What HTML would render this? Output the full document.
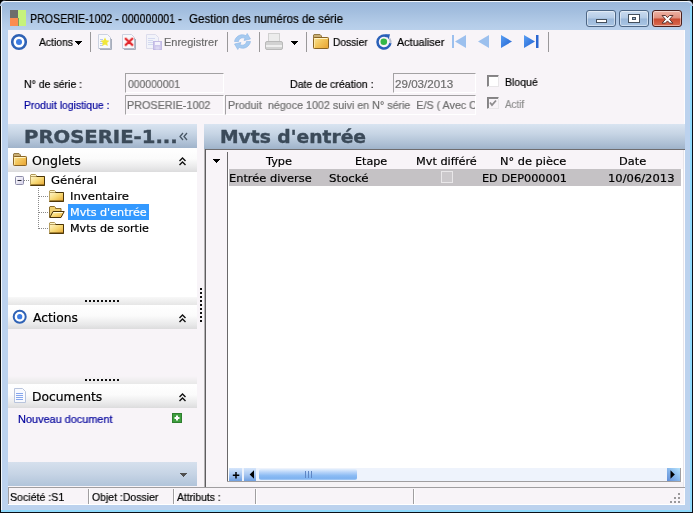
<!DOCTYPE html>
<html><head><meta charset="utf-8">
<style>
*{box-sizing:border-box;margin:0;padding:0}
html,body{width:693px;height:513px;overflow:hidden;background:#000}
body{position:relative;font-family:"Liberation Sans",sans-serif;font-size:11px;color:#000}
.a{position:absolute}
#frame{position:absolute;left:0;top:0;width:693px;height:513px;border-radius:6px 6px 0 0;overflow:hidden;background:#bcd2ee}
#cap{position:absolute;left:1px;top:1px;width:691px;height:29px;border-radius:5px 5px 0 0;background:linear-gradient(#9ab7da 0,#a4bfdf 10px,#b4cce8 22px,#bad1ec 29px);border-top:1px solid #f2f6fb}
#client{position:absolute;left:8px;top:30px;width:677px;height:475px;background:#f8f4f8}
.t{position:absolute;white-space:nowrap;line-height:14px;font-size:11px;transform-origin:0 0;will-change:transform;-webkit-text-stroke:.2px}
.sep{position:absolute;width:1px;background:#9a989a;top:32px;height:20px}
.inp{position:absolute;border:1px solid #a3a1a3;border-right-color:#fff;border-bottom-color:#fff}
.hdr{position:absolute;top:124px;height:24px;background:linear-gradient(#d9e4f1 0,#c6d4e4 40%,#adbfd4 80%,#9fb3ca 100%)}
.sec{position:absolute;left:8px;width:189px;height:24px;background:linear-gradient(#ffffff 0,#fbfbfb 45%,#e9e9ea 80%,#dcdcdd 100%)}
.cbtn{position:absolute;top:10px;height:17px;width:30px;border:1px solid #4d6685;border-radius:3px;box-shadow:inset 0 0 0 1px rgba(255,255,255,.45)}
.dot{position:absolute;width:2px;height:2px;background:#111}
</style></head><body>
<div id="frame">
 <div class="a" style="left:0;top:0;width:693px;height:1px;background:#0c0c0c"></div>
 <div id="cap"></div>
 <div class="a" style="left:1px;top:6px;width:1px;height:506px;background:#f4f8fc"></div>
 <div class="a" style="left:0;top:6px;width:1px;height:507px;background:#0c0c0c"></div>
 <div class="a" style="left:690px;top:6px;width:2px;height:506px;background:#8fdafc"></div>
 <div class="a" style="left:692px;top:6px;width:1px;height:507px;background:#0a1018"></div>
 <div class="a" style="left:1px;top:510px;width:691px;height:2px;background:#8fdafc"></div>
 <div class="a" style="left:0;top:512px;width:693px;height:1px;background:#0a1018"></div>
 <div id="client"></div>
 <div class="a" style="left:684px;top:30px;width:1px;height:475px;background:#fdfcfe"></div>

 <!-- app icon -->
 <svg class="a" style="left:10px;top:10px" width="16" height="16"><rect x="0" y="0" width="8" height="8" fill="#6d6e6b"/><rect x="0" y="8" width="8" height="8" fill="#fb8c4e"/><rect x="8" y="0" width="8" height="16" fill="#c6f27c"/><rect x="8" y="8" width="1" height="8" fill="#7f9a5c"/></svg>

 <!-- caption buttons -->
 <div class="cbtn" style="left:586px;background:linear-gradient(#cbdcf0 0,#b4cbe6 48%,#9ab7d9 52%,#a9c5e4 100%)"></div>
 <div class="cbtn" style="left:619px;background:linear-gradient(#cbdcf0 0,#b4cbe6 48%,#9ab7d9 52%,#a9c5e4 100%)"></div>
 <div class="cbtn" style="left:652px;border-color:#4a1f1c;background:linear-gradient(#eeb3a5 0,#e08f7d 48%,#c94a30 52%,#d96a50 100%)"></div>
 <svg class="a" style="left:586px;top:10px" width="97" height="17">
  <rect x="10.5" y="9.5" width="10" height="3" fill="#fff" stroke="#444f5c"/>
  <rect x="42.500" y="4.500" width="11" height="8" fill="#fff" stroke="#444f5c"/><rect x="46.500" y="7.500" width="3" height="2" fill="#9fb6d2" stroke="#444f5c"/>
  <path d="M76 5.500 h3.500 l2 2.200 l2 -2.200 h3.500 l-3.500 3.800 l3.500 3.800 h-3.500 l-2 -2.200 l-2 2.200 h-3.500 l3.500 -3.800 z" fill="#fff" stroke="#5a3430" stroke-width="1"/>
 </svg>

 <!-- toolbar icons -->
 <svg class="a" style="left:8px;top:30px" width="560" height="26">
  <defs>
   <linearGradient id="fo" x1="0" y1="0" x2="1" y2=".8"><stop offset="0" stop-color="#fbe59a"/><stop offset=".5" stop-color="#f3c65c"/><stop offset="1" stop-color="#eaa838"/></linearGradient>
   <linearGradient id="nav" x1="0" y1="0" x2="1" y2="1"><stop offset="0" stop-color="#5aa0f4"/><stop offset="1" stop-color="#1f5fd0"/></linearGradient>
  </defs>
  <!-- actions circle -->
  <circle cx="11" cy="12" r="6.800" fill="#fff" stroke="#2f62b5" stroke-width="2.600"/><circle cx="11" cy="12" r="3" fill="#3c7ce2"/>
  <path d="M67 11 h7 v1 h-1 v1 h-1 v1 h-1 v1 h-1 v-1 h-1 v-1 h-1 v-1 h-1 z" shape-rendering="crispEdges" fill="#000"/>
  <!-- new doc -->
  <path d="M90.500 4.500 h9 l3 3 v11 h-12 z" fill="#f8f9fc" stroke="#ccd2e0"/><path d="M91 18.500 h11.500 v-10.500" fill="none" stroke="#b4bac8"/><path d="M92 19.500 h11.500 v-10.500" fill="none" stroke="#a8aebc"/><path d="M92 9.500 h3 M92 11.500 h3 M92 13.500 h3 M92 15.500 h3" stroke="#b8c8ec"/>
  <path d="M97 7.500 l1.400 2.800 l3 .4 l-2.200 2.100 l.6 3.100 l-2.800 -1.500 l-2.800 1.500 l.6 -3.100 l-2.200 -2.100 l3 -.4 z" fill="#f0e73a"/>
  <!-- delete -->
  <path d="M114.500 4.500 h9 l3 3 v11 h-12 z" fill="#f8f9fc" stroke="#ccd2e0"/><path d="M115 18.500 h11.500 v-10.500" fill="none" stroke="#b4bac8"/><path d="M116 19.500 h11.500 v-10.500" fill="none" stroke="#a8aebc"/>
  <path d="M117.800 8.800 l6.400 6 M124.200 8.800 l-6.400 6" stroke="#f8b4b4" stroke-width="3.600" stroke-linecap="round"/><path d="M117.800 8.800 l6.400 6 M124.200 8.800 l-6.400 6" stroke="#e0262c" stroke-width="1.700" stroke-linecap="round"/>
  <!-- save disabled -->
  <path d="M138.500 4.500 h9 l3 3 v11 h-12 z" fill="#f2f3fa" stroke="#dcdcec"/><path d="M140 8.500 h7 M140 10.500 h5 M140 12.500 h5 M140 14.500 h5" stroke="#d4daf0"/><rect x="145.500" y="11.500" width="8" height="8" fill="#cfc8ec" stroke="#c2bae4"/><rect x="147" y="12" width="5" height="3" fill="#f4f2fc"/><rect x="147.500" y="16.500" width="4" height="3" fill="#dcd8f2"/>
  <!-- refresh faded -->
  <path d="M226.500 11.500 C227.500 6 233.500 3 238 5.800 L239.200 3.500 L242.500 9 L236 10.500 L237 8.300 C234 7 231 8.500 230.500 11.500 Z" fill="#a6caf0" stroke="#8cb6e6" stroke-width=".6"/>
  <path transform="rotate(180 234.500 11.500)" d="M226.500 11.500 C227.500 6 233.500 3 238 5.800 L239.200 3.500 L242.500 9 L236 10.500 L237 8.300 C234 7 231 8.500 230.500 11.500 Z" fill="#a6caf0" stroke="#8cb6e6" stroke-width=".6"/>
  <!-- printer -->
  <rect x="260.500" y="3.500" width="11" height="8" fill="#ececec" stroke="#d0d0d0"/><rect x="257.500" y="11.500" width="17" height="8" rx="1.500" fill="#d2d2d2" stroke="#b9b9b9"/><rect x="258" y="15" width="16" height="2" fill="#efefef"/>
  <path d="M283 11 h7 v1 h-1 v1 h-1 v1 h-1 v1 h-1 v-1 h-1 v-1 h-1 v-1 h-1 z" shape-rendering="crispEdges" fill="#000"/>
  <!-- folder -->
  <g transform="translate(305,4)"><path d="M.5 4 v-3 l.5 -.5 h6 l1.500 1.500 v2 z" fill="#c9ae74" stroke="#947a44"/><rect x=".5" y="3.500" width="15" height="11" rx=".8" fill="url(#fo)" stroke="#8a6424"/><path d="M1.500 4.500 h13" stroke="#fff4c4" stroke-width="1"/><path d="M1.500 5 v8.5" stroke="#fbe8a4" stroke-width="1"/></g>
  <!-- actualiser -->
  <path d="M379.2 6.400 A6.500 6.500 0 1 0 382.400 13.100" fill="none" stroke="#2a60b8" stroke-width="2.500"/><path d="M382.400 13.100 A6.500 6.500 0 0 0 381.500 8.500" fill="none" stroke="#b4bcd0" stroke-width="2"/><path d="M377 4.200 L382 4.300 L380.800 9.200 z" fill="#2a60b8"/><circle cx="375.800" cy="11.700" r="3.300" fill="#35b846"/>
  <!-- nav -->
  <rect x="444" y="5" width="2" height="13" fill="#9cc0ee"/><path d="M458 5 v13 l-11 -6.500 z" fill="#9cc0ee"/>
  <path d="M481 5 v13 l-11 -6.500 z" fill="#9cc0ee"/>
  <path d="M493 5 v13 l11 -6.500 z" fill="url(#nav)"/>
  <path d="M516 5 v13 l11 -6.500 z" fill="url(#nav)"/><rect x="528" y="5" width="2.500" height="13" fill="#2a66d0"/>
 </svg>
 <div class="sep" style="left:90px"></div>
 <div class="sep" style="left:227px"></div>
 <div class="sep" style="left:259px"></div>
 <div class="sep" style="left:306px"></div>
 <div class="sep" style="left:548px"></div>

 <!-- form -->
 <div class="inp" style="left:125px;top:73px;width:99px;height:20px"></div>
 <div class="inp" style="left:125px;top:95px;width:99px;height:20px"></div>
 <div class="inp" style="left:225px;top:95px;width:251px;height:20px;overflow:hidden"><div class="t" id="f5" style="left:2px;top:2px;color:#6e6e6e;transform:scaleX(.974)">Produit&nbsp; négoce 1002 suivi en N° série&nbsp; E/S ( Avec Contrôle )</div></div>
 <div class="inp" style="left:393px;top:73px;width:83px;height:20px"></div>
 <div class="a" style="left:487px;top:75px;width:12px;height:12px;background:#fff;border:1px solid #848284;border-right-color:#e8e6e8;border-bottom-color:#e8e6e8;box-shadow:inset 1px 1px 0 #8a888a"></div>
 <div class="a" style="left:487px;top:97px;width:12px;height:12px;background:#f8f4f8;border:1px solid #848284;border-right-color:#e8e6e8;border-bottom-color:#e8e6e8;box-shadow:inset 1px 1px 0 #8a888a"></div>
 <svg class="a" style="left:487px;top:97px" width="12" height="12"><path d="M3 5.500 l2 2.500 l4 -4.500" fill="none" stroke="#8f8d8f" stroke-width="1.800"/></svg>

 <!-- headers -->
 <div class="hdr" style="left:8px;width:189px"></div>
 <div class="hdr" style="left:204px;width:481px;height:25px"></div>
 <svg class="a" style="left:178px;top:131px" width="12" height="12"><path d="M5 2 l-3 3.500 l3 3.500 M9 2 l-3 3.500 l3 3.500" fill="none" stroke="#4a5866" stroke-width="1.300"/></svg>

 <!-- left panel -->
 <div class="a" style="left:8px;top:149px;width:189px;height:149px;background:#fff"></div>
 <div class="sec" style="top:148px"></div>
 <div class="a" style="left:8px;top:297px;width:189px;height:8px;background:linear-gradient(#f8f8f8,#e6e6e6)"></div>
 <div class="sec" style="top:305px"></div>
 <div class="a" style="left:8px;top:376px;width:189px;height:8px;background:linear-gradient(#f8f4f8,#e8e8e8)"></div>
 <div class="sec" style="top:384px"></div>
 <div class="a" style="left:8px;top:462px;width:189px;height:24px;background:linear-gradient(#d6e0ed 0,#c6d4e5 50%,#b1c4da 100%)"></div>
 <div class="a" style="left:68px;top:204px;width:81px;height:16px;background:#3399ff"></div>
 <svg class="a" style="left:8px;top:148px" width="197" height="340">
  <defs>
   <linearGradient id="fo2" x1="0" y1="0" x2="1" y2="1"><stop offset="0" stop-color="#fff6cc"/><stop offset=".5" stop-color="#f7d874"/><stop offset="1" stop-color="#e6a430"/></linearGradient>
   <linearGradient id="bx" x1="0" y1="0" x2="1" y2="1"><stop offset="0" stop-color="#fff"/><stop offset="1" stop-color="#d4d0e8"/></linearGradient>
  </defs>
  <!-- section icons -->
  <g transform="translate(5,5)"><path d="M.5 4 v-3 l.5 -.5 h5 l1.500 1.500 v2 z" fill="#c9ae74" stroke="#947a44"/><rect x=".5" y="3.500" width="13" height="9" rx=".8" fill="url(#fo)" stroke="#8a6424"/><path d="M1.500 4.500 h11" stroke="#fff4c4" stroke-width="1"/><path d="M1.500 5 v6.5" stroke="#fbe8a4" stroke-width="1"/></g>
  <circle cx="11.700" cy="168.700" r="6" fill="#fff" stroke="#2f62b5" stroke-width="2"/><circle cx="11.700" cy="168.700" r="2.600" fill="#3c7ce2"/>
  <path d="M6.500 240.500 h8 l3 3 v11 h-11 z" fill="#f8faff" stroke="#b8c4dc"/><path d="M8 245.500 h7 M8 247.500 h7 M8 249.500 h7 M8 251.500 h7" stroke="#86a6ec" stroke-width="1"/>
  <!-- chevrons -->
  <g fill="none" stroke="#111" stroke-width="1.400">
   <path d="M171.500 13 l3 -3 l3 3 M171.500 17 l3 -3 l3 3"/>
   <path d="M171.500 170 l3 -3 l3 3 M171.500 174 l3 -3 l3 3"/>
   <path d="M171.500 249 l3 -3 l3 3 M171.500 253 l3 -3 l3 3"/>
  </g>
  <!-- tree lines -->
  <g stroke="#8a8a8a" stroke-width="1" stroke-dasharray="1 1">
   <path d="M16 32.500 h6"/><path d="M30.500 40 v41"/><path d="M31 48.500 h10"/><path d="M31 64.500 h10"/><path d="M31 80.500 h10"/>
  </g>
  <rect x="7.500" y="28.500" width="8" height="8" rx="1" fill="url(#bx)" stroke="#8c8ca8"/><path d="M9.500 32.500 h4" stroke="#223" stroke-width="1"/>
  <g transform="translate(22,26)"><path d="M.5 3 v-2 l.5 -.5 h4.500 l1 1 v1.500 z" fill="#fff6c8" stroke="#b09858"/><rect x=".5" y="2.500" width="14" height="9" fill="url(#fo2)" stroke="#b8a060"/><path d="M6.500 2.500 h8 v9 h-14" fill="none" stroke="#4a3408"/><path d="M1 10.8 h13.5" stroke="#6a4c10" stroke-width=".8"/></g>
  <g transform="translate(41,42)"><path d="M.5 3 v-2 l.5 -.5 h4.500 l1 1 v1.500 z" fill="#fff6c8" stroke="#b09858"/><rect x=".5" y="2.500" width="14" height="9" fill="url(#fo2)" stroke="#b8a060"/><path d="M6.500 2.500 h8 v9 h-14" fill="none" stroke="#4a3408"/><path d="M1 10.8 h13.5" stroke="#6a4c10" stroke-width=".8"/></g>
  <g transform="translate(41,58)"><path d="M.5 11.500 v-10.500 l.5 -.5 h4.500 l1 1 v1 h5.500 v3" fill="#f0d070" stroke="#8a6c2c"/><path d="M.8 11.500 l3.200 -6 h11.200 l-3.200 6 z" fill="url(#fo2)" stroke="#4a3408"/><path d="M4.800 6.500 h9" stroke="#fffbe0"/></g>
  <g transform="translate(41,74)"><path d="M.5 3 v-2 l.5 -.5 h4.500 l1 1 v1.500 z" fill="#fff6c8" stroke="#b09858"/><rect x=".5" y="2.500" width="14" height="9" fill="url(#fo2)" stroke="#b8a060"/><path d="M6.500 2.500 h8 v9 h-14" fill="none" stroke="#4a3408"/><path d="M1 10.8 h13.5" stroke="#6a4c10" stroke-width=".8"/></g>
  <!-- green plus -->
  <rect x="164.500" y="265.500" width="9" height="9" fill="#3f9e3f" stroke="#2f7f2f"/><path d="M169 267.500 v5 M166.500 270 h5" stroke="#fff" stroke-width="2"/>
  <!-- bottom arrow -->
  <path d="M172 325 h7 v1 h-1 v1 h-1 v1 h-1 v1 h-1 v-1 h-1 v-1 h-1 v-1 h-1 z" shape-rendering="crispEdges" fill="#505050"/>
 </svg>
 <!-- splitter dots -->
 <svg class="a" style="left:84px;top:296px" width="130" height="90"><g fill="#111">
  <path d="M1 4h2v2h-2z M5 4h2v2h-2z M9 4h2v2h-2z M13 4h2v2h-2z M17 4h2v2h-2z M21 4h2v2h-2z M25 4h2v2h-2z M29 4h2v2h-2z M33 4h2v2h-2z"/>
  <path d="M1 83h2v2h-2z M5 83h2v2h-2z M9 83h2v2h-2z M13 83h2v2h-2z M17 83h2v2h-2z M21 83h2v2h-2z M25 83h2v2h-2z M29 83h2v2h-2z M33 83h2v2h-2z"/>
 </g></svg>
 <svg class="a" style="left:199px;top:286px" width="4" height="40"><path d="M1 2h2v2h-2z M1 6h2v2h-2z M1 10h2v2h-2z M1 14h2v2h-2z M1 18h2v2h-2z M1 22h2v2h-2z M1 26h2v2h-2z M1 30h2v2h-2z M1 34h2v2h-2z" fill="#111"/></svg>

 <!-- right panel / grid -->
 <div class="a" style="left:204px;top:149px;width:1px;height:338px;background:#b4b2b4"></div><div class="a" style="left:205px;top:149px;width:1px;height:338px;background:#5f5d5f"></div>
 <div class="a" style="left:206px;top:149px;width:479px;height:1px;background:#6f6d6f"></div>
 <div class="a" style="left:228px;top:150px;width:455px;height:332px;background:#fff"></div><div class="a" style="left:206px;top:482px;width:478px;height:5px;background:#f6f3f6"></div>
 <div class="a" style="left:206px;top:150px;width:477px;height:19px;background:#f8f4f8"></div>
 <div class="a" style="left:227px;top:152px;width:1px;height:330px;background:#6a686a"></div>
 <div class="a" style="left:229px;top:169px;width:452px;height:17px;background:#c5c2c5"></div>
 <div class="a" style="left:441px;top:171px;width:12px;height:12px;background:#cbc8cb;border:1px solid #e9e7e9"></div>
 <svg class="a" style="left:212px;top:158px" width="9" height="6"><path d="M1 1 h7 v1 h-1 v1 h-1 v1 h-1 v1 h-1 v-1 h-1 v-1 h-1 v-1 h-1 z" shape-rendering="crispEdges" fill="#000"/></svg>
 <div class="a" style="left:683px;top:150px;width:1px;height:337px;background:#e6e4ea"></div>
 <!-- scrollbar -->
 <div class="a" style="left:229px;top:468px;width:451px;height:13px;background:#eef3fc"></div>
 <div class="a" style="left:227px;top:481px;width:454px;height:1px;background:#a09ea0"></div><div class="a" style="left:680px;top:468px;width:1px;height:13px;background:#a09ea0"></div>
 <div class="a" style="left:229px;top:468px;width:13px;height:13px;background:linear-gradient(#d6e6fb 0,#a9c8f2 50%,#6f9fe0 100%)"></div>
 <div class="a" style="left:244px;top:468px;width:12px;height:13px;background:linear-gradient(#d6e6fb 0,#a9c8f2 50%,#6f9fe0 100%)"></div>
 <div class="a" style="left:667px;top:468px;width:13px;height:13px;background:linear-gradient(225deg,#b8e4fc 0,#8cbcee 45%,#5f8cd6 100%)"></div>
 <div class="a" style="left:259px;top:469px;width:98px;height:11px;border-radius:2px;background:linear-gradient(#e4effd 0,#b6d3f9 30%,#8cbcf4 60%,#7eb2f0 85%,#a8ccf6 100%)"></div>
 <svg class="a" style="left:229px;top:468px" width="452" height="14">
  <path d="M7 4 v6.500 M3.800 7.200 h6.500" stroke="#000" stroke-width="1.500"/>
  <path d="M25 2.300 v8.400 l-4.300 -4.200 z" fill="#000"/>
  <path d="M441.500 2.300 v8.400 l4.300 -4.200 z" fill="#000"/>
  <path d="M76.500 3 v7 M79.500 3 v7 M82.500 3 v7" stroke="#5f86c4" stroke-width="1"/>
 </svg>

 <!-- status bar -->
 <div class="a" style="left:8px;top:487px;width:677px;height:1px;background:#a09ea0"></div>
 <div class="a" style="left:8px;top:488px;width:1px;height:16px;background:#a09ea0"></div>
 <div class="a" style="left:8px;top:504px;width:677px;height:1px;background:#fff"></div>
 <div class="a" style="left:88px;top:489px;width:1px;height:15px;background:#a09ea0"></div><div class="a" style="left:89px;top:489px;width:1px;height:15px;background:#fff"></div>
 <div class="a" style="left:173px;top:489px;width:1px;height:15px;background:#a09ea0"></div><div class="a" style="left:174px;top:489px;width:1px;height:15px;background:#fff"></div>
 <div class="a" style="left:255px;top:489px;width:1px;height:15px;background:#a09ea0"></div><div class="a" style="left:256px;top:489px;width:1px;height:15px;background:#fff"></div>
 <div class="a" style="left:413px;top:489px;width:1px;height:15px;background:#a09ea0"></div><div class="a" style="left:414px;top:489px;width:1px;height:15px;background:#fff"></div>
 <svg class="a" style="left:668px;top:491px" width="14" height="14"><path d="M10 2h2v2h-2z M6 6h2v2h-2z M10 6h2v2h-2z M2 10h2v2h-2z M6 10h2v2h-2z M10 10h2v2h-2z" fill="#9a989a"/></svg>

<div class="t" id="title" style="left:30.15px;top:11px;font-family:'Liberation Sans',sans-serif;font-size:12.5px;line-height:16px;transform:scaleX(0.8523)">PROSERIE-1002 - 000000001 -</div>
<div class="t" id="title2" style="left:188.58px;top:11px;font-family:'Liberation Sans',sans-serif;font-size:12.5px;line-height:16px;transform:scaleX(0.9242)">Gestion des numéros de série</div>
<div class="t" id="tb1" style="left:39.00px;top:35px;font-family:'Liberation Sans',sans-serif;;transform:scaleX(0.9444)">Actions</div>
<div class="t" id="tb2" style="left:164.00px;top:35px;font-family:'Liberation Sans',sans-serif;color:#6d6d6d;transform:scaleX(1.0000)">Enregistrer</div>
<div class="t" id="tb3" style="left:333.07px;top:35px;font-family:'Liberation Sans',sans-serif;;transform:scaleX(0.9306)">Dossier</div>
<div class="t" id="tb4" style="left:396.50px;top:35px;font-family:'Liberation Sans',sans-serif;;transform:scaleX(0.9792)">Actualiser</div>
<div class="t" id="f1" style="left:24.04px;top:77px;font-family:'Liberation Sans',sans-serif;;transform:scaleX(0.9576)">N° de série :</div>
<div class="t" id="f2" style="left:24.06px;top:98px;font-family:'Liberation Sans',sans-serif;color:#00009c;transform:scaleX(0.9438)">Produit logistique :</div>
<div class="t" id="f3" style="left:127.50px;top:77px;font-family:'Liberation Sans',sans-serif;color:#6e6e6e;transform:scaleX(0.9455)">000000001</div>
<div class="t" id="f4" style="left:126.52px;top:98px;font-family:'Liberation Sans',sans-serif;color:#6e6e6e;transform:scaleX(0.9819)">PROSERIE-1002</div>
<div class="t" id="f6" style="left:290.34px;top:77px;font-family:'Liberation Sans',sans-serif;;transform:scaleX(0.9635)">Date de création :</div>
<div class="t" id="f7" style="left:395.44px;top:77px;font-family:'Liberation Sans',sans-serif;color:#6e6e6e;transform:scaleX(1.0556)">29/03/2013</div>
<div class="t" id="f8" style="left:504.55px;top:75px;font-family:'Liberation Sans',sans-serif;;transform:scaleX(0.9545)">Bloqué</div>
<div class="t" id="f9" style="left:504.70px;top:97px;font-family:'Liberation Sans',sans-serif;color:#8e8e8e;transform:scaleX(0.8952)">Actif</div>
<div class="t" id="h1" style="left:23.91px;top:124.5px;font-family:'DejaVu Sans','Liberation Sans',sans-serif;font-weight:bold;color:#3b4a59;font-size:18px;line-height:24px;-webkit-text-stroke:.4px #3b4a59;transform:scaleX(1.0906)">PROSERIE-1...</div>
<div class="t" id="h2" style="left:219.76px;top:124.5px;font-family:'DejaVu Sans','Liberation Sans',sans-serif;font-weight:bold;color:#3b4a59;font-size:18px;line-height:24px;-webkit-text-stroke:.4px #3b4a59;transform:scaleX(1.0388)">Mvts d'entrée</div>
<div class="t" id="s1" style="left:32.15px;top:153px;font-family:'DejaVu Sans','Liberation Sans',sans-serif;font-size:12px;line-height:16px;transform:scaleX(1.0511)">Onglets</div>
<div class="t" id="s2" style="left:32.70px;top:310px;font-family:'DejaVu Sans','Liberation Sans',sans-serif;font-size:12px;line-height:16px;transform:scaleX(1.0256)">Actions</div>
<div class="t" id="s3" style="left:31.97px;top:389px;font-family:'DejaVu Sans','Liberation Sans',sans-serif;font-size:12px;line-height:16px;transform:scaleX(1.0269)">Documents</div>
<div class="t" id="t1" style="left:50.94px;top:174px;font-family:'DejaVu Sans','Liberation Sans',sans-serif;;transform:scaleX(1.0610)">Général</div>
<div class="t" id="t2" style="left:69.94px;top:190px;font-family:'DejaVu Sans','Liberation Sans',sans-serif;;transform:scaleX(1.0611)">Inventaire</div>
<div class="t" id="t3" style="left:69.98px;top:206px;font-family:'DejaVu Sans','Liberation Sans',sans-serif;color:#fff;transform:scaleX(1.0162)">Mvts d'entrée</div>
<div class="t" id="t4" style="left:69.99px;top:222px;font-family:'DejaVu Sans','Liberation Sans',sans-serif;;transform:scaleX(1.0130)">Mvts de sortie</div>
<div class="t" id="nd" style="left:18.01px;top:412px;font-family:'Liberation Sans',sans-serif;color:#00009c;transform:scaleX(0.9915)">Nouveau document</div>
<div class="t" id="g1" style="left:266.30px;top:155px;font-family:'DejaVu Sans','Liberation Sans',sans-serif;;transform:scaleX(1.0280)">Type</div>
<div class="t" id="g2" style="left:354.69px;top:155px;font-family:'DejaVu Sans','Liberation Sans',sans-serif;;transform:scaleX(1.0133)">Etape</div>
<div class="t" id="g3" style="left:416.47px;top:155px;font-family:'DejaVu Sans','Liberation Sans',sans-serif;;transform:scaleX(1.0259)">Mvt différé</div>
<div class="t" id="g4" style="left:499.57px;top:155px;font-family:'DejaVu Sans','Liberation Sans',sans-serif;;transform:scaleX(1.0317)">N° de pièce</div>
<div class="t" id="g5" style="left:618.57px;top:155px;font-family:'DejaVu Sans','Liberation Sans',sans-serif;;transform:scaleX(1.0320)">Date</div>
<div class="t" id="r1" style="left:228.77px;top:172px;font-family:'DejaVu Sans','Liberation Sans',sans-serif;;transform:scaleX(1.0346)">Entrée diverse</div>
<div class="t" id="r2" style="left:328.53px;top:172px;font-family:'DejaVu Sans','Liberation Sans',sans-serif;;transform:scaleX(1.0743)">Stocké</div>
<div class="t" id="r3" style="left:482.48px;top:172px;font-family:'DejaVu Sans','Liberation Sans',sans-serif;;transform:scaleX(1.0247)">ED DEP000001</div>
<div class="t" id="r4" style="left:608.25px;top:172px;font-family:'DejaVu Sans','Liberation Sans',sans-serif;;transform:scaleX(1.0484)">10/06/2013</div>
<div class="t" id="st1" style="left:9.54px;top:490px;font-family:'Liberation Sans',sans-serif;;transform:scaleX(0.9636)">Société :S1</div>
<div class="t" id="st2" style="left:91.75px;top:490px;font-family:'Liberation Sans',sans-serif;;transform:scaleX(0.9515)">Objet :Dossier</div>
<div class="t" id="st3" style="left:176.80px;top:490px;font-family:'Liberation Sans',sans-serif;;transform:scaleX(0.9391)">Attributs :</div>
</div>
</body></html>
